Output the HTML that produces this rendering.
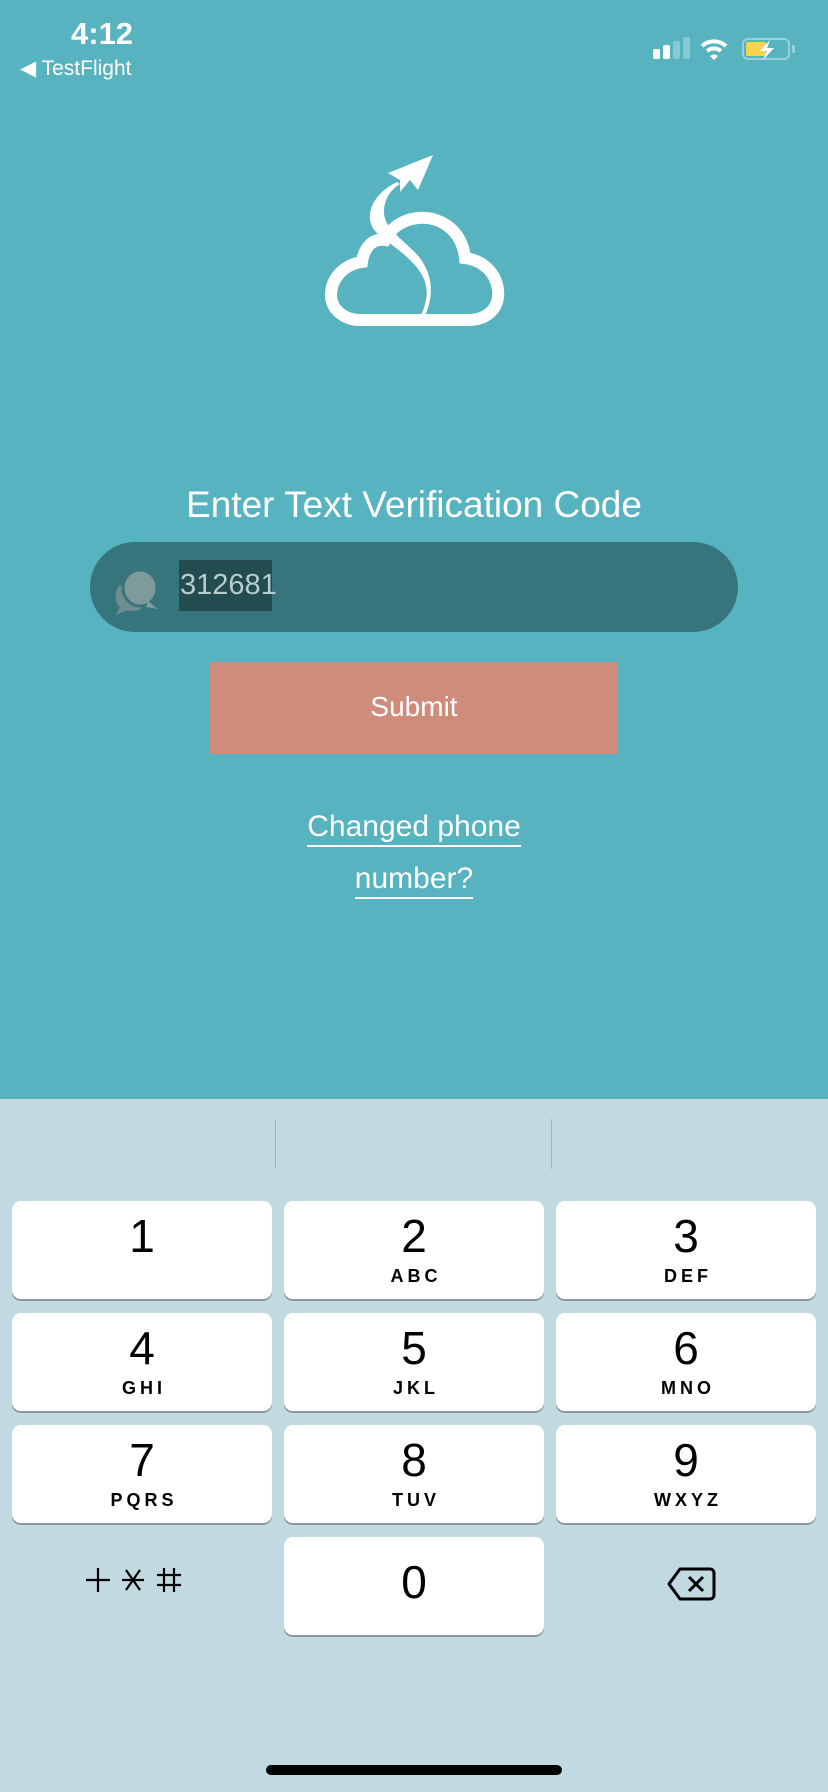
<!DOCTYPE html>
<html><head><meta charset="utf-8"><style>
*{margin:0;padding:0;box-sizing:border-box}
body{width:828px;height:1792px;position:relative;overflow:hidden;background:#56b3bf;font-family:"Liberation Sans",sans-serif}
.a{position:absolute}
.kb{left:0;top:1099px;width:828px;height:693px;background:#c1d9e0}
.key{position:absolute;width:260px;height:98px;background:#fff;border-radius:9px;box-shadow:0 2px 0 #8a979c;text-align:center}
.key .d{position:absolute;left:0;right:0;top:10px;font-size:46px;line-height:50px;color:#000}
.key .l{position:absolute;left:0;right:0;top:65px;font-size:18px;font-weight:bold;letter-spacing:4px;padding-left:4px;color:#000}
.sep{position:absolute;top:1119px;width:1px;height:50px;background:#a4b4b9}
</style></head><body>
<div class="a" style="left:71px;top:16px;font-size:31px;font-weight:bold;color:#fff">4:12</div>
<div class="a" style="left:20px;top:56px;font-size:21px;color:#fff">&#9664; TestFlight</div>
<svg class="a" style="left:650px;top:36px" width="150" height="30" viewBox="0 0 150 30">
<rect x="3" y="13" width="7" height="10" rx="2" fill="#fff"/>
<rect x="13" y="9" width="7" height="14" rx="2" fill="#fff"/>
<rect x="23" y="5" width="7" height="18" rx="2" fill="#fff" opacity=".3"/>
<rect x="33" y="1" width="7" height="22" rx="2" fill="#fff" opacity=".3"/>
<path d="M52 10 A18 18 0 0 1 76 10" stroke="#fff" stroke-width="4" fill="none"/>
<path d="M57 15 A11 11 0 0 1 71 15" stroke="#fff" stroke-width="4" fill="none"/>
<path d="M60 20 L64 24 L68 20 A6 6 0 0 0 60 20Z" fill="#fff"/>
<rect x="93" y="3" width="46" height="20" rx="5" fill="none" stroke="#fff" stroke-opacity=".4" stroke-width="2"/>
<rect x="142" y="9" width="3" height="8" rx="1" fill="#fff" opacity=".4"/>
<rect x="96" y="6" width="20" height="14" rx="2" fill="#f6d54a"/>
<path d="M120 4 L110 15 L117 15 L113 24 L124 12 L117 12 Z" fill="#fff"/>
</svg>
<svg class="a" style="left:300px;top:130px" width="240" height="220" viewBox="0 0 240 220">
<path d="M60 190 H168 C190 190 200 175 198 160 C196 142 182 130 165 128 C162 100 140 86 118 88 C100 90 90 100 85 110 C72 108 64 118 62 132 C42 135 31 150 31 165 C31 180 45 190 60 190 Z" fill="none" stroke="#fff" stroke-width="12"/>
<path d="M97 52 C70 65 62 90 78 104 C100 122 132 140 126 170 C124 180 121 186 117 190 L123 190 C132 172 136 150 120 128 C105 110 84 100 84 82 C84 70 90 60 100 54 Z" fill="#fff"/>
<polygon points="88,43 133,25 118,60 110,50 100,62 100,50" fill="#fff"/>
</svg>
<div class="a" style="left:0;width:828px;top:484px;text-align:center;font-size:37px;color:#fff">Enter Text Verification Code</div>
<div class="a" style="left:90px;top:542px;width:648px;height:90px;border-radius:45px;background:#37757c"></div>
<svg class="a" style="left:112px;top:567px" width="50" height="50" viewBox="0 0 50 50">
<path d="M8 18 C2 24 2 36 8 40 L4 48 L16 43 C24 46 30 42 32 38 Z" fill="#6f8d8e"/>
<ellipse cx="28" cy="21" rx="17" ry="18" fill="#7f9a9a" stroke="#37757c" stroke-width="3"/>
<path d="M36 34 L46 42 L34 40Z" fill="#7f9a9a"/>
</svg>
<div class="a" style="left:179px;top:560px;width:93px;height:51px;background:#224c50"></div>
<div class="a" style="left:180px;top:569px;font-size:29px;color:#b9cccc">312681</div>
<div class="a" style="left:210px;top:662px;width:408px;height:92px;background:#cf8c7a;color:#fff;font-size:28px;text-align:center;line-height:90px">Submit</div>
<div class="a" style="left:0;width:828px;top:810px;text-align:center;font-size:30px;color:#fff"><span style="border-bottom:2px solid #fff;padding-bottom:2px">Changed phone</span></div>
<div class="a" style="left:0;width:828px;top:862px;text-align:center;font-size:30px;color:#fff"><span style="border-bottom:2px solid #fff;padding-bottom:2px">number?</span></div>
<div class="a kb"></div>
<div class="sep" style="left:275px"></div><div class="sep" style="left:551px"></div>
<div class="key" style="left:12px;top:1201px"><div class="d">1</div></div>
<div class="key" style="left:284px;top:1201px"><div class="d">2</div><div class="l">ABC</div></div>
<div class="key" style="left:556px;top:1201px"><div class="d">3</div><div class="l">DEF</div></div>
<div class="key" style="left:12px;top:1313px"><div class="d">4</div><div class="l">GHI</div></div>
<div class="key" style="left:284px;top:1313px"><div class="d">5</div><div class="l">JKL</div></div>
<div class="key" style="left:556px;top:1313px"><div class="d">6</div><div class="l">MNO</div></div>
<div class="key" style="left:12px;top:1425px"><div class="d">7</div><div class="l">PQRS</div></div>
<div class="key" style="left:284px;top:1425px"><div class="d">8</div><div class="l">TUV</div></div>
<div class="key" style="left:556px;top:1425px"><div class="d">9</div><div class="l">WXYZ</div></div>
<div class="key" style="left:284px;top:1537px"><div class="d" style="top:20px">0</div></div>
<svg class="a" style="left:84px;top:1565px" width="100" height="30" viewBox="0 0 100 30">
<path d="M2 15 H26 M14 3 V27" stroke="#000" stroke-width="2.2"/>
<path d="M38 15 H60 M42 5 L56 25 M56 5 L42 25" stroke="#000" stroke-width="2.2"/>
<path d="M73 10 H97 M73 20 H97 M80 3 V27 M90 3 V27" stroke="#000" stroke-width="2.2"/>
</svg>
<svg class="a" style="left:666px;top:1566px" width="50" height="36" viewBox="0 0 50 36">
<path d="M14 3 H44 A4 4 0 0 1 48 7 V29 A4 4 0 0 1 44 33 H14 L3 18 Z" fill="none" stroke="#000" stroke-width="3" stroke-linejoin="round"/>
<path d="M23 11 L37 25 M37 11 L23 25" stroke="#000" stroke-width="3"/>
</svg>
<div class="a" style="left:266px;top:1765px;width:296px;height:10px;border-radius:5px;background:#000"></div>
</body></html>
